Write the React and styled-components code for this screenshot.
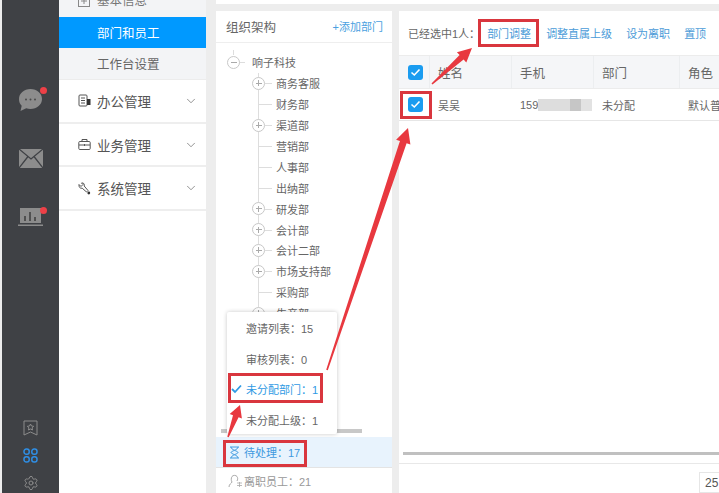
import React from "react";
import styled, { createGlobalStyle } from "styled-components";
import { ChevronDown, Settings } from "lucide-react";

const GlobalStyle = createGlobalStyle`
  html, body {
    margin: 0;
    padding: 0;
    background: #ededed;
  }
  * {
    box-sizing: border-box;
  }
`;

const Page = styled.div`
  position: relative;
  width: 719px;
  height: 493px;
  display: flex;
  overflow: hidden;
  background: #ededed;
  color: #555;
  font-family: "Liberation Sans", "Noto Sans CJK SC", sans-serif;
  font-size: 11px;
`;

const Rail = styled.div`
  width: 57px;
  margin-left: 2px;
  flex: none;
  display: flex;
  flex-direction: column;
  align-items: center;
  background: #3f4145;
  padding: 88px 0 3px;
`;

const RailIcon = styled.div`
  position: relative;
  height: ${({ h }) => h}px;
  margin-bottom: ${({ gap }) => gap || 0}px;
  display: flex;
  align-items: center;
  justify-content: center;
  color: ${({ active }) => (active ? "#2f8fe6" : "#8c8c8c")};
  ${({ dot }) =>
    dot &&
    `&:after {
      content: "";
      position: absolute;
      top: -1px;
      right: -4px;
      width: 7px;
      height: 7px;
      border-radius: 50%;
      background: #ee4047;
    }`}
`;

const RailBottom = styled.div`
  margin-top: auto;
  display: flex;
  flex-direction: column;
  align-items: center;
  gap: 12px;
`;

const Menu = styled.div`
  width: 147px;
  flex: none;
  background: #fff;
`;

const SubItem = styled.div`
  height: ${({ h }) => h || 31}px;
  padding-left: 38px;
  display: flex;
  align-items: center;
  font-size: 12.5px;
  background: ${({ active }) => (active ? "#0099ff" : "#f3f4f6")};
  color: ${({ active }) => (active ? "#fff" : "#666")};
  border-bottom: ${({ active }) => (active ? "none" : "1px solid #ececec")};
`;

const ClippedHead = styled(SubItem)`
  padding-left: 19px;
  gap: 7px;
  align-items: flex-start;
  overflow: hidden;
  border-bottom: none;
  color: #777;
  span {
    margin-top: -10px;
  }
  svg {
    margin-top: -5px;
    flex: none;
  }
`;

const Group = styled.div`
  height: 43.7px;
  padding: 0 8px 0 19px;
  display: flex;
  align-items: center;
  gap: 6px;
  font-size: 13.5px;
  color: #555;
  border-bottom: 2px solid #eeeeee;
  svg:last-child {
    margin-left: auto;
    color: #666;
  }
`;

const Content = styled.div`
  flex: 1;
  min-width: 0;
  margin-left: 10px;
  display: flex;
  flex-direction: column;
`;

const TopStrip = styled.div`
  height: 4px;
  flex: none;
  background: #fff;
`;

const Panels = styled.div`
  flex: 1;
  min-height: 0;
  margin-top: 7px;
  display: flex;
  gap: 7px;
`;

const TreePanel = styled.div`
  width: 176px;
  flex: none;
  display: flex;
  flex-direction: column;
  background: #fff;
`;

const PanelHead = styled.div`
  height: 32px;
  padding: 0 9px 0 10px;
  display: flex;
  align-items: center;
  justify-content: space-between;
  font-size: 12.5px;
  color: #666;
  border-bottom: 1px solid #eeeeee;
`;

const AddLink = styled.span`
  color: #4a9fe0;
  font-size: 11px;
`;

const Tree = styled.div`
  height: 395px;
  padding-top: 9px;
  position: relative;
  overflow: hidden;
`;

const TreeRow = styled.div`
  position: relative;
  height: 20.9px;
  display: flex;
  align-items: center;
  padding-left: ${({ root }) => (root ? 36 : 60)}px;
  color: #666;
  white-space: nowrap;
  &:before {
    content: "";
    position: absolute;
    left: ${({ root, leaf }) => (root ? 23 : leaf ? 42 : 49)}px;
    width: ${({ root, leaf }) => (root ? 6 : leaf ? 14 : 7)}px;
    top: 50%;
    border-top: 1px solid #ddd;
  }
  &:after {
    content: "";
    position: absolute;
    left: ${({ root }) => (root ? 17 : 42)}px;
    top: ${({ root }) => (root ? "-2px" : 0)};
    height: ${({ root }) => (root ? "5px" : "100%")};
    border-left: 1px solid #ddd;
    z-index: 0;
  }
`;

const Toggle = styled.span`
  position: absolute;
  z-index: 1;
  left: ${({ root }) => (root ? 11 : 36)}px;
  top: 4px;
  width: 13px;
  height: 13px;
  border: 1px solid #c8c8c8;
  border-radius: 50%;
  background: #fff;
  &:before {
    content: "";
    position: absolute;
    left: 2.5px;
    right: 2.5px;
    top: 5px;
    border-top: 1px solid #aaa;
  }
  ${({ root }) =>
    !root &&
    `&:after {
      content: "";
      position: absolute;
      top: 2.5px;
      bottom: 2.5px;
      left: 5px;
      border-left: 1px solid #aaa;
    }`}
`;

const ScrollThumb = styled.div`
  position: absolute;
  background: #c8c8c8;
  left: 5px;
  right: 30px;
  bottom: 4px;
  height: 4px;
`;

const PendingRow = styled.div`
  height: 31px;
  padding-left: 12px;
  display: flex;
  align-items: center;
  gap: 3px;
  background: #e8f3fd;
  color: #3f9ae0;
  border-bottom: 1px solid #e4e4e4;
`;

const LeftRow = styled.div`
  height: 25px;
  padding-left: 12px;
  display: flex;
  align-items: center;
  gap: 1px;
  color: #999;
`;

const Main = styled.div`
  flex: 1;
  min-width: 0;
  display: flex;
  flex-direction: column;
  background: #fff;
`;

const Toolbar = styled.div`
  height: 44px;
  padding-left: 9px;
  display: flex;
  align-items: center;
  white-space: nowrap;
  font-size: 11px;
  color: #666;
`;

const ActionLink = styled.span`
  color: #4a9bd8;
  margin-left: ${({ gap }) => gap}px;
`;

const TableRow = styled.div`
  height: 33px;
  display: grid;
  grid-template-columns: 31px 82px 82px 86px 60px;
  background: ${({ head }) => (head ? "#f5f6f8" : "#fff")};
  border-top: 1px solid #ececec;
  border-bottom: ${({ head }) => (head ? "none" : "1px solid #e6e6e6")};
  font-size: ${({ head }) => (head ? "12.5px" : "11px")};
  color: #666;
`;

const Cell = styled.div`
  display: flex;
  align-items: center;
  padding-left: ${({ pad }) => (pad === undefined ? 8 : pad)}px;
  overflow: hidden;
  white-space: nowrap;
  justify-content: ${({ center }) => (center ? "center" : "flex-start")};
  border-right: ${({ head }) => (head ? "1px solid #eceef0" : "none")};
`;

const Check = styled.span`
  width: 15px;
  height: 15px;
  margin-left: 2px;
  border-radius: 3px;
  background: #1a9cf0;
  display: flex;
  align-items: center;
  justify-content: center;
`;

const Masked = styled.span`
  width: 54px;
  height: 12px;
  background: linear-gradient(90deg, #ddd 0 60%, #c6c6c6 60% 80%, #e2e2e2 80%);
`;

const Spacer = styled.div`
  flex: 1;
`;

const HScroll = styled.div`
  height: 3px;
  margin-left: 4px;
  background: #c0c0c0;
`;

const Footer = styled.div`
  height: 30px;
  margin-top: 8px;
  padding: 8px 0 0 300px;
  border-top: 1px solid #e8e8e8;
`;

const PageSize = styled.div`
  width: 40px;
  height: 21px;
  padding-left: 5px;
  display: flex;
  align-items: center;
  border: 1px solid #e6e6e6;
  font-size: 12px;
  color: #555;
`;

const Popup = styled.div`
  position: absolute;
  left: 227px;
  top: 312px;
  width: 110px;
  height: 122px;
  padding-top: 1px;
  background: #fff;
  border-radius: 2px;
  box-shadow: 0 0 4px rgba(0, 0, 0, 0.22);
  z-index: 3;
`;

const PopupItem = styled.div`
  position: relative;
  height: 30.5px;
  padding-left: 19px;
  display: flex;
  align-items: center;
  color: ${({ active }) => (active ? "#2f9ae4" : "#666")};
  svg {
    position: absolute;
    left: 4px;
    top: 10px;
  }
`;

const RedBox = styled.div`
  position: absolute;
  z-index: 5;
  left: ${({ x }) => x}px;
  top: ${({ y }) => y}px;
  width: ${({ w }) => w}px;
  height: ${({ h }) => h}px;
  border: 3px solid #d9363e;
`;

const Overlay = styled.svg`
  position: absolute;
  left: 0;
  top: 0;
  z-index: 6;
  pointer-events: none;
`;

const CheckMark = () => (
  <svg width="11" height="9" viewBox="0 0 11 9">
    <path d="M1.5 4.5 L4.3 7 L9.5 1.5" fill="none" stroke="#fff" strokeWidth="1.6" />
  </svg>
);

const OfficeIcon = () => (
  <svg width="13" height="13" viewBox="0 0 13 13" fill="none" stroke="#555">
    <rect x="1" y="1" width="8" height="11" rx="1" />
    <path d="M3 4h4M3 6.5h4M3 9h4" />
    <rect x="9" y="5" width="3.5" height="6" fill="#333" stroke="none" />
  </svg>
);

const CaseIcon = () => (
  <svg width="13" height="13" viewBox="0 0 13 13" fill="none" stroke="#555">
    <rect x="0.8" y="3.5" width="11.4" height="8" rx="1" />
    <path d="M4 3.5V1.5h5v2M1 7h11M6.5 6v2" />
  </svg>
);

const WrenchIcon = () => (
  <svg width="13" height="13" viewBox="0 0 13 13" fill="none" stroke="#555">
    <path d="M1 2.5 L3 4.5 L5 2.5 L3.5 1 C5.5 0.5 6.8 2 6.2 4 L10 8.5 L8.5 10 L4.2 6.2 C2.2 6.8 0.6 5 1 2.5Z" />
    <circle cx="10.8" cy="11" r="1.4" fill="#333" stroke="none" />
  </svg>
);

const ChatIcon = () => (
  <svg width="25" height="24" viewBox="0 0 25 24">
    <path d="M12.5 1C19 1 24 5.5 24 11s-5 10-11.5 10c-1.5 0-3-.3-4.3-.7L2.5 23l1.200-5.300C1.800 16 1 13.700 1 11 1 5.500 6 1 12.500 1Z" fill="#8c8c8c" />
    <circle cx="8" cy="11.500" r="1" fill="#4a4a4a" />
    <circle cx="12.500" cy="11.500" r="1" fill="#4a4a4a" />
    <circle cx="17" cy="11.500" r="1" fill="#4a4a4a" />
  </svg>
);

const MailIcon = () => (
  <svg width="24" height="19" viewBox="0 0 24 19">
    <rect width="24" height="19" fill="#8c8c8c" />
    <path d="M0 0 L12 10 L24 0 M0 19 L9 7.500 M24 19 L15 7.500" fill="none" stroke="#3f4145" strokeWidth="1.300" />
  </svg>
);

const ChartIcon = () => (
  <svg width="25" height="19" viewBox="0 0 25 19">
    <rect x="2" y="0" width="21" height="15" fill="#8c8c8c" />
    <rect x="0" y="16.500" width="25" height="1.500" fill="#8c8c8c" />
    <path d="M7 13V8M12 13V4M17 13V9" stroke="#4a4a4a" strokeWidth="1.800" />
  </svg>
);

const BookmarkIcon = () => (
  <svg width="15" height="16" viewBox="0 0 15 16" fill="none" stroke="#8c8c8c">
    <path d="M1 1h13v14l-6.500-3L1 15Z" />
    <path d="M7.500 4l1 2 2.200.3-1.600 1.500.4 2.200-2-1-2 1 .4-2.200L4.300 6.300 6.500 6Z" />
  </svg>
);

const GridIcon = () => (
  <svg width="15" height="15" viewBox="0 0 15 15" fill="none" stroke="#2f8fe6" strokeWidth="1.500">
    <rect x="1" y="1" width="5.200" height="5.200" rx="2.300" />
    <rect x="8.800" y="1" width="5.200" height="5.200" rx="2.300" />
    <rect x="1" y="8.800" width="5.200" height="5.200" rx="2.300" />
    <rect x="8.800" y="8.800" width="5.200" height="5.200" rx="2.300" />
  </svg>
);

const HourglassIcon = () => (
  <svg width="13" height="13" viewBox="0 0 13 13" fill="none" stroke="#3f9ae0">
    <path d="M2 1h9M2 12h9M3 1c0 3 7 4 7 5.500S3 9 3 12M10 1c0 3-7 4-7 5.500S10 9 10 12" />
  </svg>
);

const LeaveIcon = () => (
  <svg width="15" height="15" viewBox="0 0 15 15" fill="none" stroke="#aaa">
    <path d="M1 14c0-3 2.500-3.500 3-5C3 7.500 3 5 4 3.500 5 2 8 2 9 3.500s.8 3 0 4.500" />
    <path d="M9 10h5M9 12.500h5M11.500 9v5" strokeWidth="0.800" />
  </svg>
);

// tapered red arrow, thin at the tail and wide at the head
const Arrow = ({ from, to, head, wing, neck, tail = 0.8 }) => {
  const dx = to[0] - from[0];
  const dy = to[1] - from[1];
  const len = Math.hypot(dx, dy);
  const ux = dx / len;
  const uy = dy / len;
  const px = -uy;
  const py = ux;
  const bx = to[0] - ux * head;
  const by = to[1] - uy * head;
  const pt = (x, y) => `${x.toFixed(1)},${y.toFixed(1)}`;
  const points = [
    pt(from[0] + px * tail, from[1] + py * tail),
    pt(bx + px * neck, by + py * neck),
    pt(bx + px * wing, by + py * wing),
    pt(to[0], to[1]),
    pt(bx - px * wing, by - py * wing),
    pt(bx - px * neck, by - py * neck),
    pt(from[0] - px * tail, from[1] - py * tail),
  ].join(" ");
  return <polygon points={points} fill="#e8383f" />;
};

const treeRows = [
  { name: "商务客服", open: true },
  { name: "财务部" },
  { name: "渠道部", open: true },
  { name: "营销部" },
  { name: "人事部" },
  { name: "出纳部" },
  { name: "研发部", open: true },
  { name: "会计部", open: true },
  { name: "会计二部", open: true },
  { name: "市场支持部", open: true },
  { name: "采购部" },
  { name: "生产部", open: true },
];

const popupItems = [
  { label: "邀请列表：15" },
  { label: "审核列表：0" },
  { label: "未分配部门：1", active: true },
  { label: "未分配上级：1" },
];

export default function App() {
  return (
    <Page>
      <GlobalStyle />
      <Rail>
        <RailIcon h={24} gap={37} dot>
          <ChatIcon />
        </RailIcon>
        <RailIcon h={19} gap={40}>
          <MailIcon />
        </RailIcon>
        <RailIcon h={19} dot>
          <ChartIcon />
        </RailIcon>
        <RailBottom>
          <RailIcon h={16}>
            <BookmarkIcon />
          </RailIcon>
          <RailIcon h={15} active>
            <GridIcon />
          </RailIcon>
          <RailIcon h={15}>
            <Settings size={16} strokeWidth={1.5} />
          </RailIcon>
        </RailBottom>
      </Rail>

      <Menu>
        <ClippedHead h={17}>
          <svg width="12" height="12" viewBox="0 0 12 12" fill="none" stroke="#888">
            <rect x="0.5" y="0.5" width="11" height="11" />
            <path d="M3 6h6M6 3v6" />
          </svg>
          <span>基本信息</span>
        </ClippedHead>
        <SubItem active>部门和员工</SubItem>
        <SubItem h={32}>工作台设置</SubItem>
        <Group>
          <OfficeIcon />
          办公管理
          <ChevronDown size={14} strokeWidth={1.2} />
        </Group>
        <Group>
          <CaseIcon />
          业务管理
          <ChevronDown size={14} strokeWidth={1.2} />
        </Group>
        <Group>
          <WrenchIcon />
          系统管理
          <ChevronDown size={14} strokeWidth={1.2} />
        </Group>
      </Menu>

      <Content>
        <TopStrip />
        <Panels>
          <TreePanel>
            <PanelHead>
              组织架构
              <AddLink>+添加部门</AddLink>
            </PanelHead>
            <Tree>
              <TreeRow root>
                <Toggle root />
                响子科技
              </TreeRow>
              {treeRows.map((row) => (
                <TreeRow key={row.name} leaf={!row.open}>
                  {row.open && <Toggle />}
                  {row.name}
                </TreeRow>
              ))}
              <ScrollThumb />
            </Tree>
            <PendingRow>
              <HourglassIcon />
              待处理：17
            </PendingRow>
            <LeftRow>
              <LeaveIcon />
              离职员工：21
            </LeftRow>
          </TreePanel>

          <Main>
            <Toolbar>
              已经选中1人：
              <ActionLink gap={7}>部门调整</ActionLink>
              <ActionLink gap={15}>调整直属上级</ActionLink>
              <ActionLink gap={14}>设为离职</ActionLink>
              <ActionLink gap={14}>置顶</ActionLink>
            </Toolbar>
            <TableRow head>
              <Cell head center pad={0}>
                <Check>
                  <CheckMark />
                </Check>
              </Cell>
              <Cell head>姓名</Cell>
              <Cell head>手机</Cell>
              <Cell head>部门</Cell>
              <Cell>角色</Cell>
            </TableRow>
            <TableRow>
              <Cell center pad={0}>
                <Check>
                  <CheckMark />
                </Check>
              </Cell>
              <Cell>吴吴</Cell>
              <Cell>
                159
                <Masked />
              </Cell>
              <Cell>未分配</Cell>
              <Cell>默认普通成员</Cell>
            </TableRow>
            <Spacer />
            <HScroll />
            <Footer>
              <PageSize>25</PageSize>
            </Footer>
          </Main>
        </Panels>
      </Content>

      <Popup>
        {popupItems.map((item) => (
          <PopupItem key={item.label} active={item.active}>
            {item.active && (
              <svg width="11" height="10" viewBox="0 0 11 10">
                <path d="M1 5 L4 8 L10 1.5" fill="none" stroke="#2f9ae4" strokeWidth="1.8" />
              </svg>
            )}
            {item.label}
          </PopupItem>
        ))}
      </Popup>

      <RedBox x={478} y={19} w={61} h={28} />
      <RedBox x={400} y={91} w={32} h={28} />
      <RedBox x={228} y={373} w={95} h={30} />
      <RedBox x={223} y={440} w={84} h={27} />

      <Overlay width="719" height="493" viewBox="0 0 719 493">
        <Arrow from={[432, 84]} to={[472, 48]} head={14} wing={7} neck={3} />
        <Arrow from={[327, 370]} to={[408, 128]} head={15} wing={7.5} neck={3.5} />
        <Arrow from={[228, 437]} to={[240, 405]} head={12} wing={6.5} neck={3} />
      </Overlay>
    </Page>
  );
}
